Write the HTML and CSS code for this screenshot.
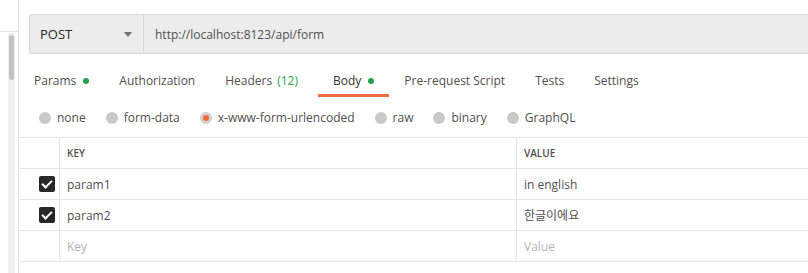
FILE: index.html
```html
<!DOCTYPE html>
<html lang="en">
<head>
  <meta charset="UTF-8" />
  <title>Request</title>
  <link rel="stylesheet" href="styles.css">
</head>
<body>
  <div class="sidebar">
    <div class="sidebar-head"></div>
    <div class="scroll-track"><div class="scroll-thumb"></div></div>
  </div>

  <div class="main">
    <div class="url-bar">
      <div class="method">
        <span>POST</span>
        <span class="caret"></span>
      </div>
      <div class="url">http://localhost:8123/api/form</div>
    </div>

    <div class="tabs">
      <div class="tab">Params <span class="dot"></span></div>
      <div class="tab">Authorization</div>
      <div class="tab">Headers <span class="count">(12)</span></div>
      <div class="tab active">Body <span class="dot"></span></div>
      <div class="tab">Pre-request Script</div>
      <div class="tab">Tests</div>
      <div class="tab">Settings</div>
    </div>

    <div class="body-types">
      <label class="radio"><span class="circle"></span>none</label>
      <label class="radio"><span class="circle"></span>form-data</label>
      <label class="radio"><span class="circle checked"></span>x-www-form-urlencoded</label>
      <label class="radio"><span class="circle"></span>raw</label>
      <label class="radio"><span class="circle"></span>binary</label>
      <label class="radio"><span class="circle"></span>GraphQL</label>
    </div>

    <div class="kv-table">
      <div class="kv-row head">
        <div class="cell check"></div>
        <div class="cell key">KEY</div>
        <div class="cell value">VALUE</div>
      </div>
      <div class="kv-row">
        <div class="cell check"><span class="checkbox"></span></div>
        <div class="cell key">param1</div>
        <div class="cell value">in english</div>
      </div>
      <div class="kv-row">
        <div class="cell check"><span class="checkbox"></span></div>
        <div class="cell key">param2</div>
        <div class="cell value">한글이에요</div>
      </div>
      <div class="kv-row">
        <div class="cell check"></div>
        <div class="cell key placeholder">Key</div>
        <div class="cell value placeholder">Value</div>
      </div>
    </div>
  </div>
</body>
</html>
```

FILE: styles.css
```css
body {
  margin: 0;
  display: flex;
  height: 273px;
  overflow: hidden;
  font-family: "Open Sans", "Noto Sans CJK KR", sans-serif;
  font-size: 12px;
  color: #505050;
  background: #fff;
}

.sidebar {
  width: 18px;
  flex-shrink: 0;
  border-right: 1px solid #e4e4e4;
  display: flex;
  flex-direction: column;
}

.sidebar-head {
  height: 31px;
  border-bottom: 1px solid #e4e4e4;
}

.scroll-track {
  flex: 1;
  margin: 1px 3px 0 8px;
  background: #f0f0f0;
  padding: 2px 1px;
}

.scroll-thumb {
  height: 45px;
  background: #c3c3c3;
  border-radius: 3px;
}

.main {
  flex: 1;
  min-width: 0;
}

.url-bar {
  display: flex;
  height: 38px;
  margin: 14px 0 0 10px;
  border: 1px solid #d8d8d8;
  border-right: none;
  border-radius: 3px 0 0 3px;
  background: #ececec;
}

.method {
  width: 114px;
  border-right: 1px solid #d8d8d8;
  display: flex;
  align-items: center;
  justify-content: space-between;
  padding: 0 11px 0 10px;
  box-sizing: border-box;
  font-size: 13px;
  color: #282828;
}

.caret {
  width: 0;
  height: 0;
  border-left: 4px solid transparent;
  border-right: 4px solid transparent;
  border-top: 5px solid #707070;
}

.url {
  display: flex;
  align-items: center;
  padding-left: 11px;
  color: #505050;
}

.tabs {
  display: flex;
  padding-top: 18px;
}

.tab {
  padding: 0 15px 4px;
  line-height: 18px;
  border-bottom: 3px solid transparent;
  white-space: nowrap;
  display: flex;
  align-items: center;
}

.tab.active {
  border-bottom-color: #f26b3a;
  color: #333;
}

.dot {
  width: 6px;
  height: 6px;
  border-radius: 50%;
  background: #26a04c;
  margin-left: 7px;
}

.count {
  color: #26a04c;
  margin: 0 5px 0 5px;
}

.body-types {
  display: flex;
  padding: 12px 0 0 20px;
  line-height: 18px;
}

.radio {
  display: flex;
  align-items: center;
  margin-right: 20px;
}

.circle {
  width: 12px;
  height: 12px;
  border-radius: 50%;
  background: #c9c9c9;
  margin-right: 6px;
  box-sizing: border-box;
}

.circle.checked {
  border: 3px solid #cfcfcf;
  background: #f26b3a;
}

.kv-table {
  margin-top: 10px;
  border-top: 1px solid #e6e6e6;
}

.kv-row {
  display: flex;
  height: 30px;
  border-bottom: 1px solid #e6e6e6;
}

.cell {
  display: flex;
  align-items: center;
  padding: 0 7px;
  box-sizing: border-box;
}

.cell.check {
  width: 41px;
  padding: 0 4px 0 0;
  justify-content: flex-end;
  border-right: 1px solid #e6e6e6;
}

.cell.key {
  width: 457px;
  border-right: 1px solid #e6e6e6;
}

.cell.value {
  flex: 1;
}

.head .cell {
  font-size: 10px;
  font-weight: 600;
  color: #505050;
}

.placeholder {
  color: #b4b4b4;
}

.checkbox {
  width: 16px;
  height: 16px;
  border-radius: 2px;
  background: #282828;
  position: relative;
}

.checkbox::after {
  content: "";
  position: absolute;
  left: 5px;
  top: 2px;
  width: 4px;
  height: 8px;
  border: solid #fff;
  border-width: 0 2px 2px 0;
  transform: rotate(45deg);
}
```
